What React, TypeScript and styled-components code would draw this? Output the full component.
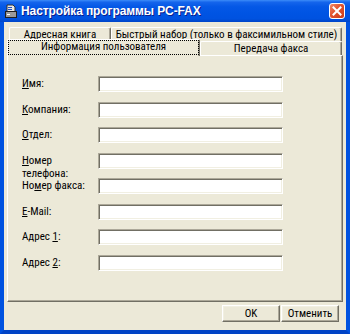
import React from 'react';
import styled, { createGlobalStyle } from 'styled-components';

const GlobalStyle = createGlobalStyle`
  html, body { margin: 0; padding: 0; background: #ffffff; }
  body {
    font-family: "Roboto Condensed", "Liberation Sans", Arial, sans-serif;
    font-size: 11px;
    color: #000;
  }
`;

const Window = styled.div`
  width: 350px;
  height: 334px;
  display: flex;
  flex-direction: column;
  box-sizing: border-box;
  overflow: hidden;
`;

const TitleBar = styled.div`
  flex: none;
  height: 22px;
  display: flex;
  align-items: center;
  padding: 0 5px 0 4px;
  box-sizing: border-box;
  background: linear-gradient(
    to bottom,
    #3c8cf8 0%,
    #1565ec 10%,
    #0558e6 30%,
    #0054e3 60%,
    #0052e0 85%,
    #0045c8 100%
  );
`;

const TitleText = styled.div`
  flex: 1;
  margin-left: 3px;
  color: #fff;
  font-family: "Liberation Sans", Arial, sans-serif;
  font-weight: bold;
  font-size: 12px;
  letter-spacing: -0.1px;
  text-shadow: 1px 1px 0 #0a1e8c;
  white-space: nowrap;
`;

const CloseButton = styled.div`
  width: 16px;
  height: 16px;
  box-sizing: border-box;
  border: 1px solid #fff;
  border-radius: 3px;
  background: linear-gradient(135deg, #f08a6a 0%, #e2532e 45%, #c93b1a 100%);
  display: flex;
  align-items: center;
  justify-content: center;
`;

const Body = styled.div`
  flex: 1;
  display: flex;
  flex-direction: column;
  background: #ece9d8;
  border-left: 4px solid #0052e0;
  border-right: 4px solid #0052e0;
  border-bottom: 4px solid #0043c6;
  padding: 5px 3px 0 3px;
`;

const TabStrip = styled.div`
  display: flex;
  flex-direction: column;
`;

const TabRow = styled.div<{ $indent: number }>`
  display: flex;
  align-items: flex-end;
  height: 14px;
  padding-left: ${p => p.$indent}px;
`;

const Tab = styled.div<{ $w: number; $active?: boolean }>`
  box-sizing: border-box;
  flex: none;
  width: ${p => p.$w}px;
  height: ${p => (p.$active ? 17 : 14)}px;
  margin-top: ${p => (p.$active ? -2 : 0)}px;
  margin-bottom: ${p => (p.$active ? -1 : 0)}px;
  background: #ece9d8;
  border-top: 1px solid #fff;
  border-left: 1px solid #fff;
  border-right: 1px solid #716f64;
  box-shadow: inset -1px 0 0 #aca899;
  border-radius: 2px 2px 0 0;
  display: flex;
  align-items: center;
  justify-content: center;
  position: relative;
  z-index: ${p => (p.$active ? 1 : 0)};
  white-space: nowrap;
  line-height: 12px;
  padding-bottom: ${p => (p.$active ? 2 : 0)}px;
  outline: ${p => (p.$active ? '1px dotted #000' : 'none')};
  outline-offset: -2px;
`;

const Panel = styled.div`
  box-sizing: border-box;
  height: 247px;
  border-top: 1px solid #fff;
  border-left: 1px solid #fff;
  border-right: 1px solid #716f64;
  border-bottom: 1px solid #716f64;
  box-shadow: inset -1px -1px 0 #aca899;
  padding: 20px 0 0 14px;
`;

const Form = styled.div`
  display: grid;
  grid-template-columns: 76px 185px;
  grid-auto-rows: 16px;
  row-gap: 9.57px;
`;

const Label = styled.div`
  padding-top: 1px;
  line-height: 13px;
  white-space: pre-line;
`;

const Key = styled.span`
  text-decoration: underline;
`;

const Field = styled.div`
  box-sizing: border-box;
  height: 16px;
  background: #fff;
  border: 1px solid;
  border-color: #aca899 #fff #fff #aca899;
  box-shadow: inset 1px 1px 0 #716f64, inset -1px -1px 0 #f1efe2;
`;

const ButtonRow = styled.div`
  display: flex;
  justify-content: flex-end;
  gap: 1px;
  margin: 3px 4px 0 0;
`;

const Button = styled.div`
  box-sizing: border-box;
  width: 58px;
  height: 17px;
  display: flex;
  align-items: center;
  justify-content: center;
  background: #ece9d8;
  border-top: 1px solid #fff;
  border-left: 1px solid #fff;
  border-right: 1px solid #716f64;
  border-bottom: 1px solid #716f64;
  box-shadow: inset -1px -1px 0 #aca899, inset 1px 1px 0 #f1efe2;
  line-height: 12px;
`;

const AppIcon = () => (
  <svg width="14" height="15" viewBox="0 0 14 15">
    <path d="M3 1h6l2 2v6H3z" fill="#e8e8e8" stroke="#303030" strokeWidth="1" />
    <rect x="1.5" y="7.5" width="11" height="6" fill="#9a9a9a" stroke="#202020" />
    <rect x="4" y="3" width="4" height="1" fill="#2050c0" />
    <rect x="4" y="5" width="4" height="1" fill="#2050c0" />
    <rect x="3" y="10" width="3" height="1" fill="#ffffff" />
  </svg>
);

const CloseIcon = () => (
  <svg width="10" height="10" viewBox="0 0 10 10">
    <path d="M1.5 1.5l7 7M8.5 1.5l-7 7" stroke="#fff" strokeWidth="2" strokeLinecap="square" />
  </svg>
);

type Row = { label: React.ReactNode };

const rows: Row[] = [
  { label: <><Key>И</Key>мя:</> },
  { label: <><Key>К</Key>омпания:</> },
  { label: <><Key>О</Key>тдел:</> },
  { label: <><Key>Н</Key>омер{'\n'}телефона:</> },
  { label: <>Но<Key>м</Key>ер факса:</> },
  { label: <><Key>E</Key>-Mail:</> },
  { label: <>Адрес <Key>1</Key>:</> },
  { label: <>Адрес <Key>2</Key>:</> },
];

export default function App() {
  return (
    <>
      <GlobalStyle />
      <Window>
        <TitleBar>
          <AppIcon />
          <TitleText>Настройка программы PC-FAX</TitleText>
          <CloseButton>
            <CloseIcon />
          </CloseButton>
        </TitleBar>
        <Body>
          <TabStrip>
            <TabRow $indent={2}>
              <Tab $w={102}>Адресная книга</Tab>
              <Tab $w={231}>Быстрый набор (только в факсимильном стиле)</Tab>
            </TabRow>
            <TabRow $indent={0}>
              <Tab $w={193} $active>Информация пользователя</Tab>
              <Tab $w={142}>Передача факса</Tab>
            </TabRow>
          </TabStrip>
          <Panel>
            <Form>
              {rows.map((r, i) => (
                <React.Fragment key={i}>
                  <Label>{r.label}</Label>
                  <Field />
                </React.Fragment>
              ))}
            </Form>
          </Panel>
          <ButtonRow>
            <Button>OK</Button>
            <Button>Отменить</Button>
          </ButtonRow>
        </Body>
      </Window>
    </>
  );
}
